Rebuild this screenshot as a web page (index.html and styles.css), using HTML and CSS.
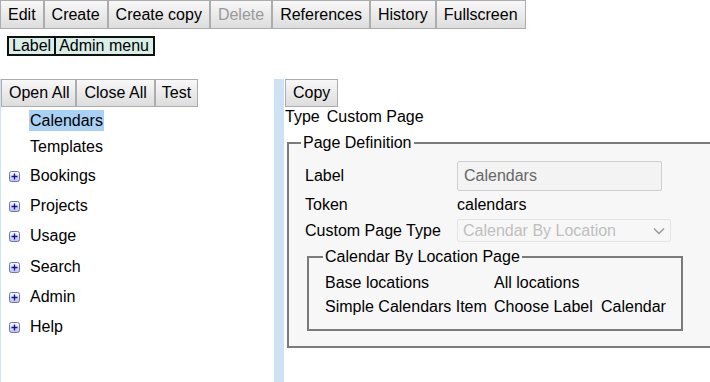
FILE: index.html
```html
<!DOCTYPE html>
<html lang="en">
<head>
    <meta charset="UTF-8">
    <meta name="viewport" content="width=device-width, initial-scale=1.0">
    <title>Admin menu</title>
    <link rel="stylesheet" href="styles.css">
</head>
<body>
    <div class="toolbar">
        <button class="btn">Edit</button>
        <button class="btn">Create</button>
        <button class="btn">Create copy</button>
        <button class="btn" disabled>Delete</button>
        <button class="btn">References</button>
        <button class="btn">History</button>
        <button class="btn">Fullscreen</button>
    </div>

    <div class="crumbs">
        <span class="crumb">Label</span><span class="crumb">Admin menu</span>
    </div>

    <div class="main">
        <div class="sidebar">
            <div class="side-tools">
                <button class="btn">Open All</button>
                <button class="btn">Close All</button>
                <button class="btn">Test</button>
            </div>
            <ul class="tree">
                <li class="leaf"><span class="selected">Calendars</span></li>
                <li class="leaf"><span>Templates</span></li>
                <li class="node"><svg class="plus" width="11" height="11" viewBox="0 0 11 11"><defs><linearGradient id="pg" x1="0" y1="0" x2="0" y2="1"><stop offset="0" stop-color="#ffffff"/><stop offset="1" stop-color="#b9bfea"/></linearGradient></defs><rect x="0.5" y="0.5" width="10" height="10" rx="2" fill="url(#pg)" stroke="#6d73ad"/><path d="M2.5 5.5h6M5.5 2.5v6" stroke="#10109a" stroke-width="1.3"/></svg><span>Bookings</span></li>
                <li class="node"><svg class="plus" width="11" height="11" viewBox="0 0 11 11"><rect x="0.5" y="0.5" width="10" height="10" rx="2" fill="url(#pg)" stroke="#6d73ad"/><path d="M2.5 5.5h6M5.5 2.5v6" stroke="#10109a" stroke-width="1.3"/></svg><span>Projects</span></li>
                <li class="node"><svg class="plus" width="11" height="11" viewBox="0 0 11 11"><rect x="0.5" y="0.5" width="10" height="10" rx="2" fill="url(#pg)" stroke="#6d73ad"/><path d="M2.5 5.5h6M5.5 2.5v6" stroke="#10109a" stroke-width="1.3"/></svg><span>Usage</span></li>
                <li class="node"><svg class="plus" width="11" height="11" viewBox="0 0 11 11"><rect x="0.5" y="0.5" width="10" height="10" rx="2" fill="url(#pg)" stroke="#6d73ad"/><path d="M2.5 5.5h6M5.5 2.5v6" stroke="#10109a" stroke-width="1.3"/></svg><span>Search</span></li>
                <li class="node"><svg class="plus" width="11" height="11" viewBox="0 0 11 11"><rect x="0.5" y="0.5" width="10" height="10" rx="2" fill="url(#pg)" stroke="#6d73ad"/><path d="M2.5 5.5h6M5.5 2.5v6" stroke="#10109a" stroke-width="1.3"/></svg><span>Admin</span></li>
                <li class="node"><svg class="plus" width="11" height="11" viewBox="0 0 11 11"><rect x="0.5" y="0.5" width="10" height="10" rx="2" fill="url(#pg)" stroke="#6d73ad"/><path d="M2.5 5.5h6M5.5 2.5v6" stroke="#10109a" stroke-width="1.3"/></svg><span>Help</span></li>
            </ul>
        </div>

        <div class="splitter"></div>

        <div class="content">
            <button class="btn">Copy</button>
            <div class="type-row"><span>Type</span><span>Custom Page</span></div>

            <fieldset class="page-def">
                <legend>Page Definition</legend>
                <div class="form-grid">
                    <label for="label">Label</label>
                    <input type="text" id="label" value="Calendars" disabled>

                    <span>Token</span>
                    <span>calendars</span>

                    <label for="page-type">Custom Page Type</label>
                    <div class="select-wrap">
                        <select id="page-type" disabled>
                            <option>Calendar By Location</option>
                        </select>
                        <svg class="chevron" width="12" height="8" viewBox="0 0 12 8"><path d="M1 1.5l5 5 5-5" fill="none" stroke="#999" stroke-width="1.4"/></svg>
                    </div>

                    <fieldset class="sub-def">
                        <legend>Calendar By Location Page</legend>
                        <div class="sub-grid">
                            <span>Base locations</span>
                            <span>All locations</span>
                            <span></span>
                            <span>Simple Calendars Item</span>
                            <span>Choose Label</span>
                            <span>Calendar</span>
                        </div>
                    </fieldset>
                </div>
            </fieldset>
        </div>
    </div>
</body>
</html>
```

FILE: styles.css
```css
* {
    margin: 0;
    padding: 0;
    box-sizing: border-box;
    font-family: 'Liberation Sans', Arial, sans-serif;
}

html, body {
    overflow: hidden;
}

body {
    background: #fff;
    color: #000;
    font-size: 16px;
    width: 710px;
    height: 382px;
}

.btn {
    height: 29px;
    padding: 0 7px;
    font-size: 16px;
    line-height: 27px;
    color: #000;
    background: linear-gradient(#f8f8f8, #dddddd);
    border: 1px solid #acacac;
    border-radius: 0;
    white-space: nowrap;
}

.btn:disabled {
    color: #9a9a9a;
}

.toolbar {
    display: flex;
}

.crumbs {
    display: inline-flex;
    margin: 7px 0 0 7px;
    border: 2px solid #111;
    background: #d8eee7;
    line-height: 16px;
}

.crumb {
    padding: 0 3px 0 3px;
}

.crumb + .crumb {
    border-left: 2px solid #111;
    padding-right: 4px;
}

.main {
    display: flex;
    margin-top: 23px;
    height: 303px;
}

.sidebar {
    width: 274px;
    border-left: 1px solid #cfe2f3;
}

.side-tools {
    display: flex;
}

.side-tools .btn {
    height: 28px;
    line-height: 26px;
    padding: 0 7px;
}

.side-tools .btn:first-child {
    padding: 0 6px 0 7px;
}

.side-tools .btn:last-child {
    padding: 0 6px;
}

.tree {
    list-style: none;
    margin-top: 3px;
}

.tree .leaf {
    height: 26px;
    padding-left: 28px;
    line-height: 21px;
}

.tree .leaf span {
    display: inline-block;
    padding: 0 1px;
}

.tree .selected {
    background: #a9d0f5;
}

.tree .node {
    display: flex;
    align-items: flex-start;
    height: 30.4px;
    padding: 2.5px 0 0 8px;
    line-height: 21px;
}

.plus {
    margin: 6px 10px 0 0;
    flex-shrink: 0;
}

.splitter {
    width: 10px;
    background: #cfe2f3;
}

.content {
    flex: 1;
    padding-left: 1px;
    min-width: 0;
}

.content .btn {
    height: 28px;
    line-height: 26px;
}

.type-row {
    display: flex;
    gap: 7px;
    margin-top: 1px;
    line-height: 18px;
}

.page-def {
    width: 440px;
    margin: 8px 0 0 2px;
    padding: 8px 12px 10px;
    background: #f7f7f7;
    border: 2px solid #7b7b7b;
}

legend {
    padding: 0 2px;
    line-height: 18px;
}

.page-def > legend {
    background: linear-gradient(#fff 50%, #f7f7f7 50%);
}

.form-grid {
    display: grid;
    grid-template-columns: 152px 214px;
    row-gap: 2px;
    align-items: center;
    margin-left: 4px;
    padding-top: 1px;
}

.form-grid input {
    width: 205px;
    height: 30px;
    padding: 0 6px;
    font-size: 16px;
    color: #666;
    background: #f3f3f3;
    border: 1px solid #cfcfcf;
    border-radius: 2px;
}

.form-grid > span {
    line-height: 24px;
}

.select-wrap {
    position: relative;
    width: 214px;
}

.select-wrap select {
    appearance: none;
    -webkit-appearance: none;
    width: 214px;
    height: 23px;
    padding: 0 5px;
    font-size: 16px;
    color: #a8a8a8;
    background: #f7f7f7;
    border: 1px solid #dcdcdc;
    border-radius: 2px;
}

.chevron {
    position: absolute;
    right: 6px;
    top: 8px;
}

.sub-def {
    grid-column: 1 / span 2;
    width: 376px;
    margin: 4px 2px 5px 2px;
    padding: 5px 12px 10px;
    border: 2px solid #7b7b7b;
}

.sub-def > legend {
    margin-left: 2px;
    background: #f7f7f7;
}

.sub-grid {
    display: grid;
    grid-template-columns: 169px 107px auto;
    margin-left: 4px;
    line-height: 24px;
    white-space: nowrap;
}
```
